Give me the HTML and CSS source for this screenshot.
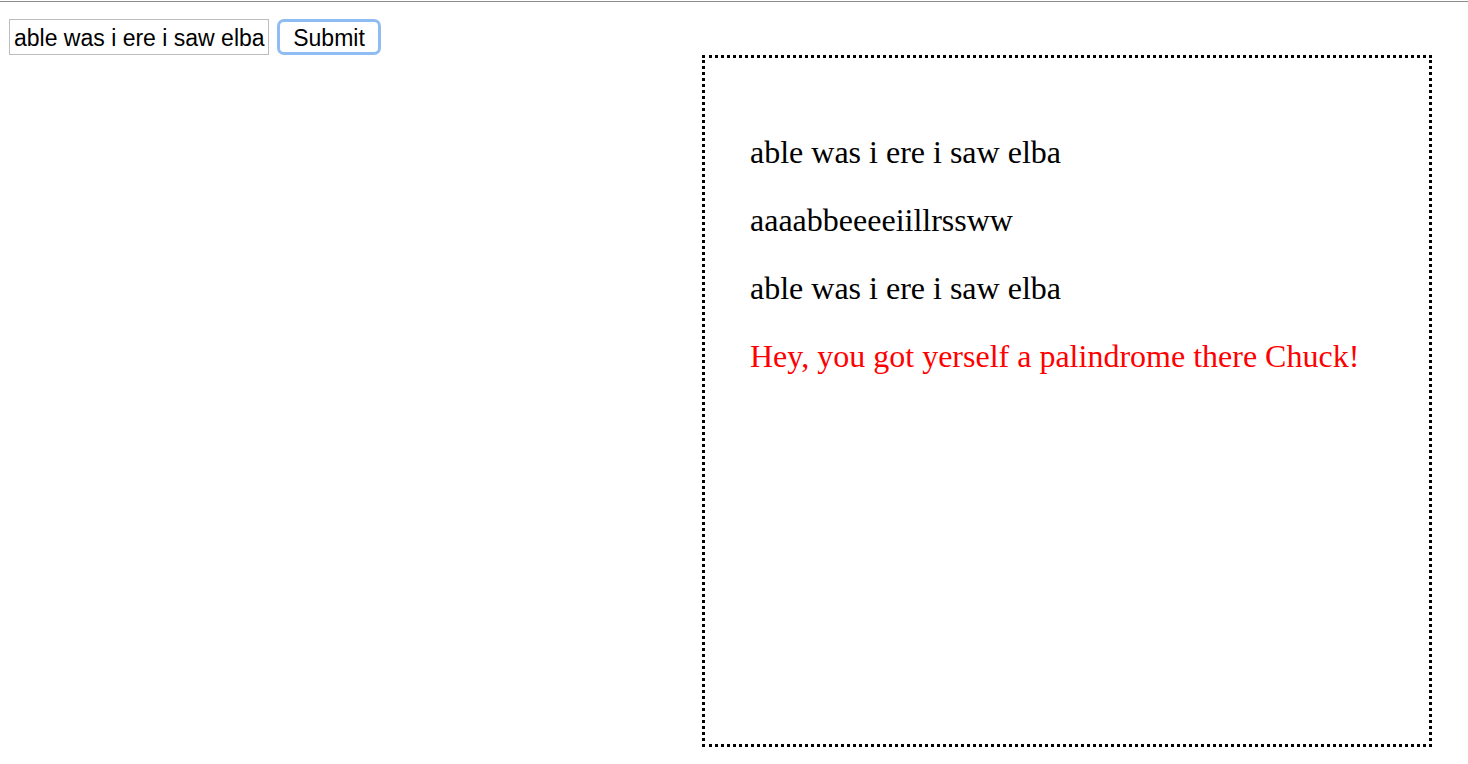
FILE: index.html
```html
<!DOCTYPE html>
<html>
<head>
<meta charset="utf-8">
<link rel="stylesheet" href="styles.css">
</head>
<body>
<div class="topline"></div>
<main class="page">
  <form class="entry">
    <input class="word-input" type="text" value="able was i ere i saw elba">
    <button class="submit-btn" type="button">Submit</button>
  </form>
  <section class="result-wrap">
    <div class="result">
      <p class="line">able was i ere i saw elba</p>
      <p class="line">aaaabbeeeeiillrssww</p>
      <p class="line">able was i ere i saw elba</p>
      <p class="line verdict">Hey, you got yerself a palindrome there Chuck!</p>
    </div>
  </section>
</main>
</body>
</html>
```

FILE: styles.css
```css
html, body {
  margin: 0;
  padding: 0;
  background: #fff;
}

.topline {
  height: 1px;
  margin-top: 1px;
  background: #8c8c8c;
}

.page {
  display: flex;
  flex-direction: column;
}

.entry {
  display: flex;
  align-items: center;
  gap: 8px;
  margin: 17px 0 0 9px;
  height: 36px;
}

.word-input {
  box-sizing: border-box;
  width: 260px;
  height: 36px;
  margin: 0;
  padding: 3px 3px 0 4px;
  border: 1px solid #bdbdbd;
  border-radius: 0;
  font-family: "Liberation Sans", Arial, sans-serif;
  font-size: 23px;
  color: #000;
  outline: none;
}

.submit-btn {
  box-sizing: border-box;
  width: 104px;
  height: 36px;
  margin: 0;
  padding: 3px 0 0;
  background: #fff;
  border: 3px solid #8fbcf3;
  border-radius: 7px;
  font-family: "Liberation Sans", Arial, sans-serif;
  font-size: 23px;
  color: #000;
}

.result-wrap {
  display: flex;
  justify-content: flex-end;
  padding-right: 36px;
}

.result {
  box-sizing: border-box;
  width: 730px;
  height: 692px;
  border: 3px dotted #000;
  padding: 78px 45px 0;
  display: flex;
  flex-direction: column;
  gap: 36px;
}

.line {
  margin: 0;
  font-family: "Liberation Serif", "Times New Roman", serif;
  font-size: 32px;
  line-height: 32px;
  color: #000;
}

.verdict {
  color: #ff0000;
}
```
